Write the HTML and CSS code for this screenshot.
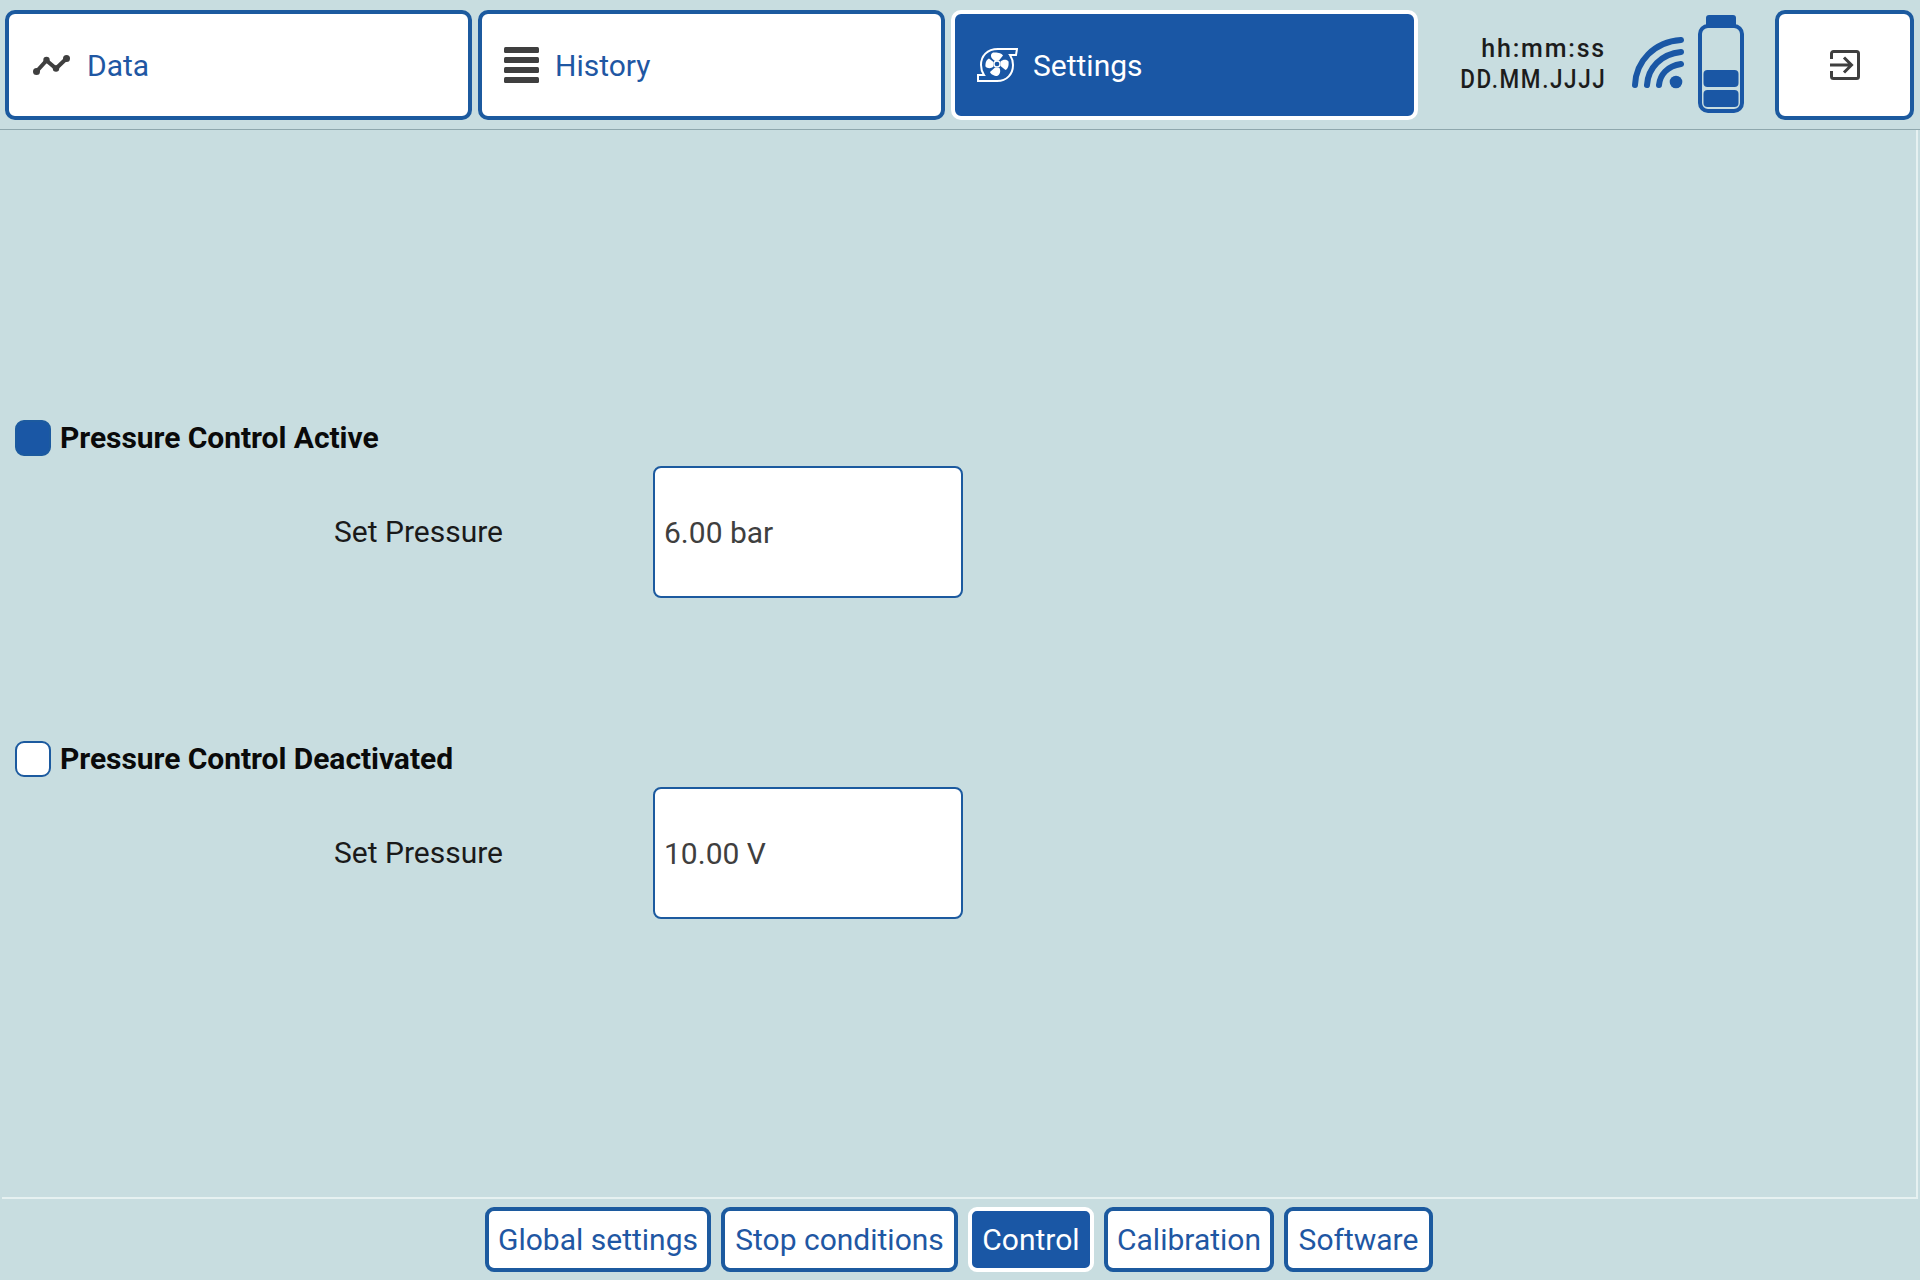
FILE: index.html
```html
<!DOCTYPE html>
<html lang="en">
<head>
<meta charset="utf-8">
<title>Control settings</title>
<link rel="stylesheet" href="styles.css">
</head>
<body>
<div class="app">
  <header class="topbar">
    <a class="tab tab-data"><svg class="ico ico-data" viewBox="0 0 37 20"><path d="M3.5 16.500 13.500 5.500 23 13.500 33.500 3.500" fill="none" stroke="#3f3f3f" stroke-width="4"/><circle cx="3.500" cy="16.500" r="3.500" fill="#3f3f3f"/><circle cx="13.500" cy="5" r="3.200" fill="#3f3f3f"/><circle cx="23" cy="13.500" r="3.200" fill="#3f3f3f"/><circle cx="33.500" cy="3.500" r="3.500" fill="#3f3f3f"/></svg><span>Data</span></a>
    <a class="tab tab-history"><svg class="ico ico-history" viewBox="0 0 35 36"><rect y="0" width="35" height="6" rx="1.500" fill="#3f3f3f"/><rect y="10" width="35" height="6" rx="1.500" fill="#3f3f3f"/><rect y="20" width="35" height="6" rx="1.500" fill="#3f3f3f"/><rect y="30" width="35" height="6" rx="1.500" fill="#3f3f3f"/></svg><span>History</span></a>
    <a class="tab tab-settings is-active"><svg class="ico ico-fan" viewBox="0 0 41 34"><path d="M40 1H21C10 1 4 8 4 17C4 21 5 24 7 27H1V33H20C30 33 36 26 36 17C36 13 35 10 33 7H39Z" fill="none" stroke="#fff" stroke-width="2"/><g fill="#fff"><path d="M18 13C13 10 13 6 16 4.500C20 4 25 5 26 7.500L22 12.500Z"/><path d="M23.500 13.500C26 11 30 11 31.500 13.500C32 17 31 21 28.500 22L23.500 18Z"/><path d="M22.500 20C24 23 23 27 20 28C17 28 13.500 26 13 24L18 19.500Z"/><path d="M16.500 18.500C14 21 10 20.500 8.500 18.500C8 15 9.500 11.500 12 10.500L16.500 14Z"/></g><circle cx="20" cy="16" r="3" fill="#1a57a5" stroke="#fff" stroke-width="1.300"/></svg><span>Settings</span></a>
    <div class="status">
      <div class="clock"><span>hh:mm:ss</span><span class="date">DD.MM.JJJJ</span></div>
      <svg class="wifi" viewBox="0 0 52 52"><g fill="none" stroke="#1a57a5" stroke-width="6" stroke-linecap="round"><path d="M3 48C4 24 22 5 49 3"/><path d="M15 48C16 31 29 17 49 15"/><path d="M27 48C28 38 35 29 49 27"/></g><circle cx="44" cy="45" r="6.300" fill="#1a57a5"/></svg>
      <svg class="battery" viewBox="0 0 46 98"><path d="M11 0h24a3 3 0 0 1 3 3v9H8V3a3 3 0 0 1 3-3Z" fill="#1a57a5"/><rect x="2" y="11" width="42" height="85" rx="8" fill="none" stroke="#1a57a5" stroke-width="4"/><rect x="5.500" y="55" width="35" height="17" rx="4" fill="#1a57a5"/><rect x="5.500" y="75" width="35" height="17" rx="4" fill="#1a57a5"/></svg>
    </div>
    <a class="tab tab-exit"><svg class="ico-exit" viewBox="0 0 30 30"><path d="M1.500 9V3.500a2 2 0 0 1 2-2h23a2 2 0 0 1 2 2v23a2 2 0 0 1-2 2h-23a2 2 0 0 1-2-2V21" fill="none" stroke="#3f3f3f" stroke-width="3"/><path d="M0 15H21M14 7.500 21.500 15 14 22.500" fill="none" stroke="#3f3f3f" stroke-width="3"/></svg></a>
  </header>
  <main class="content">
    <section class="group">
      <div class="check-row"><span class="check is-on"></span><span class="check-label">Pressure Control Active</span></div>
      <div class="field"><span class="field-label">Set Pressure</span><div class="input">6.00 bar</div></div>
    </section>
    <section class="group">
      <div class="check-row"><span class="check"></span><span class="check-label">Pressure Control Deactivated</span></div>
      <div class="field"><span class="field-label">Set Pressure</span><div class="input">10.00 V</div></div>
    </section>
  </main>
  <nav class="subnav">
    <a class="sub sub-global">Global settings</a>
    <a class="sub sub-stop">Stop conditions</a>
    <a class="sub sub-control is-active">Control</a>
    <a class="sub sub-calib">Calibration</a>
    <a class="sub sub-soft">Software</a>
  </nav>
</div>
</body>
</html>
```
FILE: styles.css
```css
* { box-sizing: border-box; }
html, body { margin: 0; height: 100%; }
body { background: #c8dde0; font-family: Roboto, "Liberation Sans", sans-serif; overflow: hidden; }
.app { display: flex; flex-direction: column; height: 1280px; }

.topbar { height: 130px; flex: none; display: flex; align-items: flex-start; padding: 10px 6px 0 5px; gap: 6px; border-bottom: 1px solid #8ea7ad; }
.tab { width: 467px; height: 110px; flex: none; display: flex; align-items: center; background: #fff; border: 4px solid #1c5a9f; border-radius: 10px; color: #1f57a3; font-size: 30px; padding-left: 22px; }
.tab.is-active { background: #1a57a5; border-color: #fff; color: #fff; }
.ico { flex: none; }
.ico-data { width: 37px; height: 20px; margin: 0 17px 0 2px; }
.ico-history { width: 35px; height: 36px; margin-right: 16px; }
.ico-fan { width: 41px; height: 34px; margin-right: 15px; }

.status { flex: 1; height: 110px; display: flex; align-items: flex-start; justify-content: flex-end; }
.clock { display: flex; flex-direction: column; align-items: flex-end; color: #1c1c1c; font-size: 25px; line-height: 31px; letter-spacing: 1.800px; margin: 23px 26px 0 0; font-weight: 500; }
.date { transform: scaleX(0.9); transform-origin: right center; }
.wifi { width: 52px; height: 52px; margin: 27px 14px 0 0; flex: none; }
.battery { width: 46px; height: 98px; margin: 5px 25px 0 0; flex: none; }
.tab-exit { width: 139px; justify-content: center; padding: 0; }
.ico-exit { width: 30px; height: 30px; }

.content { flex: 1; margin: 0 2px; border-right: 2px solid #e6f1f1; border-bottom: 2px solid #e6f1f1; padding: 290px 0 0 13px; display: flex; flex-direction: column; gap: 143px; }
.group { display: flex; flex-direction: column; gap: 10px; }
.check-row { display: flex; align-items: center; gap: 9px; height: 36px; }
.check { width: 36px; height: 36px; flex: none; border: 2px solid #1c5a9f; border-radius: 9px; background: #fff; }
.check.is-on { background: #1a57a5; }
.check-label { font-size: 30px; font-weight: 700; color: #0a0a0a; line-height: 34px; letter-spacing: -0.05px; }
.field { display: flex; align-items: center; padding-left: 319px; }
.field-label { width: 319px; font-size: 30px; line-height: 34px; color: #1a1a1a; }
.input { width: 310px; height: 132px; display: flex; align-items: center; background: #fff; border: 2px solid #1c5a9f; border-radius: 8px; padding: 0 0 0 9px; font-size: 30px; color: #3f3f3f; }

.subnav { height: 81px; flex: none; display: flex; justify-content: center; align-items: flex-start; padding: 8px 2px 0 0; gap: 10px; }
.sub { height: 65px; display: flex; align-items: center; justify-content: center; background: #fff; border: 4px solid #1c5a9f; border-radius: 9px; color: #1f57a3; font-size: 30px; }
.sub.is-active { background: #1a57a5; border-color: #fff; color: #fff; }
.sub-global { width: 226px; }
.sub-stop { width: 237px; }
.sub-control { width: 126px; }
.sub-calib { width: 170px; }
.sub-soft { width: 149px; }
```
